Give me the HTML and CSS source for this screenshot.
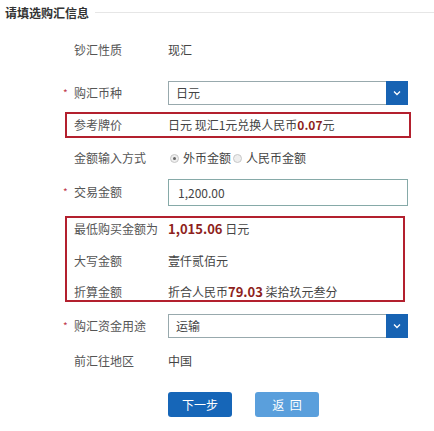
FILE: index.html
```html
<!DOCTYPE html>
<html lang="zh-CN">
<head>
  <meta charset="UTF-8" />
  <meta name="viewport" content="width=device-width, initial-scale=1" />
  <title>请填选购汇信息</title>
  <link rel="stylesheet" href="styles.css">
</head>
<body>
  <div class="section-title">
    <span>请填选购汇信息</span>
    <div class="title-line"></div>
  </div>

  <div class="form">
    <div class="row row-first">
      <span class="star"></span>
      <span class="label">钞汇性质</span>
      <span class="value">现汇</span>
    </div>

    <div class="row row-select">
      <span class="star">*</span>
      <span class="label">购汇币种</span>
      <div class="select">
        <span>日元</span>
        <span class="select-btn">
          <svg width="8" height="6" viewBox="0 0 8 6"><path d="M1 1.5 L4 4.5 L7 1.5" fill="none" stroke="#fff" stroke-width="1.3"/></svg>
        </span>
      </div>
    </div>

    <div class="red-box box-rate">
      <div class="row in-box">
        <span class="star"></span>
        <span class="label">参考牌价</span>
        <span class="value">日元 现汇1元兑换人民币<b class="num">0.07</b>元</span>
      </div>
    </div>

    <div class="row row-radio">
      <span class="star"></span>
      <span class="label">金额输入方式</span>
      <span class="value radios">
        <span class="radio checked"></span>外币金额
        <span class="radio"></span>人民币金额
      </span>
    </div>

    <div class="row row-input">
      <span class="star">*</span>
      <span class="label">交易金额</span>
      <div class="input">1,200.00</div>
    </div>

    <div class="red-box box-sum">
      <div class="row in-box">
        <span class="star"></span>
        <span class="label">最低购买金额为</span>
        <span class="value"><b class="num big">1,015.06</b> 日元</span>
      </div>
      <div class="row in-box">
        <span class="star"></span>
        <span class="label">大写金额</span>
        <span class="value">壹仟贰佰元</span>
      </div>
      <div class="row in-box">
        <span class="star"></span>
        <span class="label">折算金额</span>
        <span class="value">折合人民币<b class="num big">79.03</b> 柒拾玖元叁分</span>
      </div>
    </div>

    <div class="row row-select2">
      <span class="star">*</span>
      <span class="label">购汇资金用途</span>
      <div class="select">
        <span>运输</span>
        <span class="select-btn">
          <svg width="8" height="6" viewBox="0 0 8 6"><path d="M1 1.5 L4 4.5 L7 1.5" fill="none" stroke="#fff" stroke-width="1.3"/></svg>
        </span>
      </div>
    </div>

    <div class="row row-last">
      <span class="star"></span>
      <span class="label">前汇往地区</span>
      <span class="value">中国</span>
    </div>

    <div class="buttons">
      <button class="btn btn-next">下一步</button>
      <button class="btn btn-back">返&nbsp;&nbsp;回</button>
    </div>
  </div>
</body>
</html>
```

FILE: styles.css
```css
body {
  margin: 0;
  padding: 0;
  background: #fff;
  font-family: "Noto Sans CJK SC", "Noto Sans", sans-serif;
  font-size: 12px;
  color: #444;
}

.section-title {
  display: flex;
  align-items: center;
  height: 24px;
  padding-left: 5px;
  font-weight: bold;
  color: #333;
}
.title-line {
  flex: 1;
  height: 1px;
  margin-left: 6px;
  background: #e6e6e6;
}

.form {
  margin-left: 63px;
  width: 348px;
}

.row {
  display: grid;
  grid-template-columns: 11px 94px 1fr;
  align-items: center;
  line-height: 16px;
}
.star {
  color: #c0394b;
  font-size: 10px;
}
.label {
  color: #555;
}
.value {
  color: #444;
}
.num {
  color: #8e1f20;
  font-weight: bold;
}
.num.big {
  font-size: 13px;
}

.row-first {
  height: 32px;
  margin-top: 10px;
}
.row-select {
  height: 32px;
  margin-top: 11px;
}
.row-radio {
  height: 34px;
  margin-top: 3px;
}
.row-input {
  height: 34px;
}
.row-select2 {
  height: 30px;
  margin-top: 9px;
}
.row-last {
  height: 30px;
  margin-top: 5px;
}

.select {
  display: flex;
  align-items: center;
  justify-content: space-between;
  width: 240px;
  height: 24px;
  box-sizing: border-box;
  border: 1px solid #98a9ad;
  padding-left: 7px;
}
.select-btn {
  display: flex;
  align-items: center;
  justify-content: center;
  width: 22px;
  height: 24px;
  margin-right: -1px;
  background: #1763b3;
}

.input {
  width: 240px;
  height: 27px;
  box-sizing: border-box;
  border: 1px solid #86aaa8;
  padding-left: 9px;
  line-height: 25px;
  color: #444;
}

.radios {
  display: flex;
  align-items: center;
}
.radio {
  display: inline-block;
  width: 7px;
  height: 7px;
  border: 1px solid #c8c8c8;
  border-radius: 50%;
  background: #eee;
  margin: 0 4px 0 2px;
  position: relative;
}
.radio.checked::after {
  content: "";
  position: absolute;
  left: 2px;
  top: 2px;
  width: 3px;
  height: 3px;
  border-radius: 50%;
  background: #666;
}

.red-box {
  margin-left: 2px;
  border: 2px solid #b3202e;
  box-sizing: border-box;
}
.red-box .row {
  grid-template-columns: 7px 94px 1fr;
}
.box-rate {
  width: 346px;
  height: 26px;
  margin-top: 3px;
  display: flex;
  align-items: center;
}
.box-rate .row {
  flex: 1;
}
.box-sum {
  width: 340px;
  margin-top: 7px;
  padding-top: 3px;
  display: flex;
  flex-direction: column;
  gap: 16px;
}
.box-sum .row:last-child {
  margin-top: -1px;
}

.buttons {
  display: flex;
  gap: 23px;
  margin-top: 16px;
  padding-left: 105px;
}
.btn {
  width: 64px;
  height: 25px;
  border: none;
  border-radius: 3px;
  color: #fff;
  font-family: inherit;
  font-size: 12px;
  padding: 0;
}
.btn-next {
  background: #1666b8;
}
.btn-back {
  background: #5a9fdc;
}
```
